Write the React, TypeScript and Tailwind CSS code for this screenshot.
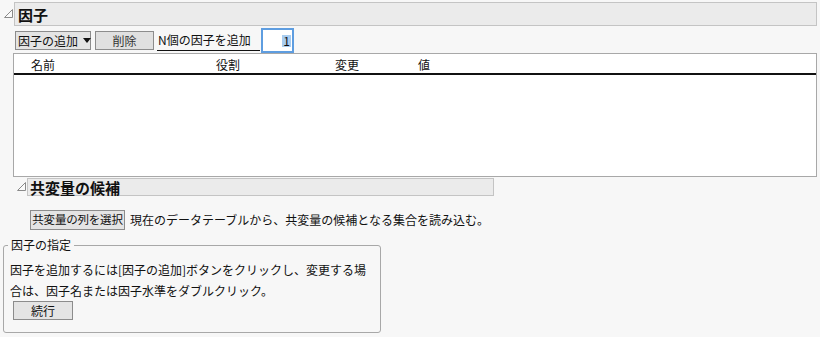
import React from "react";

const Tri = () => (
  <svg width="9" height="9" viewBox="0 0 9 9" className="shrink-0">
    <path d="M0.5 8.5 L8.5 0.5 L8.5 8.5 Z" fill="#fafafa" stroke="#8a8a8a" strokeWidth="1" />
  </svg>
);

export default function App() {
  return (
    <div
      className="w-[820px] h-[337px] bg-[#f7f7f7] overflow-hidden text-[12px] text-[#111] leading-none whitespace-nowrap"
      style={{ fontFamily: '"Noto Sans CJK JP", "Noto Sans", sans-serif' }}
    >
      {/* Title */}
      <div className="flex items-end pt-[2px] pl-[4px]">
        <div className="mb-[8px] mr-[1px]"><Tri /></div>
        <div className="w-[803px] h-[24px] bg-[#ebebeb] border border-[#c4c4c4] flex items-center pl-[3px]">
          <span className="text-[15px] font-bold">因子</span>
        </div>
      </div>

      {/* Toolbar */}
      <div className="flex items-center pl-[15px] mt-[2px] h-[25px]">
        <div className="h-[19px] w-[76px] bg-[#e4e4e4] border border-[#8c8c8c] flex items-center pl-[2px] gap-[5px]">
          <span>因子の追加</span>
          <svg width="8" height="5" viewBox="0 0 8 5" className="shrink-0"><path d="M0 0 H8 L4 5 Z" fill="#111" /></svg>
        </div>
        <div className="ml-[4px] h-[19px] w-[59px] bg-[#e0e0e0] border border-[#8c8c8c] flex items-center justify-center">
          <span className="text-[#333]">削除</span>
        </div>
        <div className="ml-[3px] h-[21px] w-[103px] border-b border-[#111] flex items-center pl-[1px]">
          N個の因子を追加
        </div>
        <div className="ml-[1px] h-[25px] w-[33px] border-2 border-[#5e9de0] bg-white flex items-center justify-end pr-[1px]">
          <span className="bg-[#a9cdf0] px-[1px]">1</span>
        </div>
      </div>

      {/* Table */}
      <div className="ml-[13px] w-[804px] h-[124px] border border-[#a8a8a8] bg-white">
        <div className="relative h-[21px] border-b-2 border-[#111] text-[12px]">
          <span className="absolute left-[17px] top-[5px]">名前</span>
          <span className="absolute left-[202px] top-[5px]">役割</span>
          <span className="absolute left-[321px] top-[5px]">変更</span>
          <span className="absolute left-[404px] top-[5px]">値</span>
        </div>
      </div>

      {/* Covariates header */}
      <div className="flex items-end pl-[17px] mt-[1px]">
        <div className="mb-[5px] mr-[1px]"><Tri /></div>
        <div className="w-[467px] h-[18px] bg-[#ebebeb] border border-[#c4c4c4] flex items-center pl-[2px]">
          <span className="text-[15px] font-bold">共変量の候補</span>
        </div>
      </div>

      <div className="flex items-center pl-[30px] mt-[14px]">
        <div className="h-[20px] w-[95px] bg-[#e4e4e4] border border-[#8c8c8c] flex items-center justify-center text-[11.5px] tracking-[-0.2px]">
          共変量の列を選択
        </div>
        <span className="ml-[5px]">現在のデータテーブルから、共変量の候補となる集合を読み込む。</span>
      </div>

      {/* Group box */}
      <div className="relative ml-[3px] mt-[15px] w-[378px] h-[88px] border border-[#a8a8a8] rounded-[3px]">
        <span className="absolute -top-[7px] left-[4px] bg-[#f7f7f7] px-[3px] text-[12px]">因子の指定</span>
        <div className="pl-[6px] pt-[13px]">
          <div className="h-[21px] leading-[21px]">因子を追加するには[因子の追加]ボタンをクリックし、変更する場</div>
          <div className="h-[21px] leading-[21px]">合は、因子名または因子水準をダブルクリック。</div>
        </div>
        <div className="ml-[9px] mt-0 h-[19px] w-[60px] bg-[#e4e4e4] border border-[#8c8c8c] flex items-center justify-center">
          続行
        </div>
      </div>
    </div>
  );
}
